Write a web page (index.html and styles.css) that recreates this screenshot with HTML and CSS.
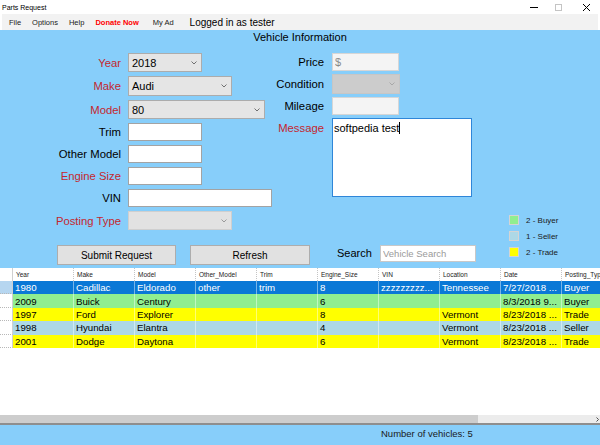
FILE: index.html
```html
<!DOCTYPE html>
<html>
<head>
<meta charset="utf-8">
<title>Parts Request</title>
<link rel="stylesheet" href="styles.css">
</head>
<body>
<div class="window">
  <div class="titlebar">
    <span class="title">Parts Request</span>
    <div class="winctl">
      <svg class="wc-min" width="8" height="8" viewBox="0 0 8 8"><path d="M0 4.5H8" stroke="#000" stroke-width="1"/></svg>
      <svg class="wc-max" width="7" height="7" viewBox="0 0 7 7"><rect x="0.5" y="0.5" width="6" height="6" fill="none" stroke="#c4c4c4" stroke-width="1"/></svg>
      <svg class="wc-close" width="7" height="7" viewBox="0 0 7 7"><path d="M0 0L7 7M7 0L0 7" stroke="#000" stroke-width="1"/></svg>
    </div>
  </div>
  <div class="menubar">
    <span>File</span>
    <span>Options</span>
    <span>Help</span>
    <span class="donate">Donate Now</span>
    <span class="myad">My Ad</span>
    <span class="logged">Logged in as tester</span>
  </div>

  <div class="main">
    <div class="heading">Vehicle Information</div>
    <div class="content">
      <div class="leftpane">
        <div class="forms">
          <div class="form-left">
            <span class="lbl req">Year</span>
            <div class="combo w74"><span>2018</span><svg width="6" height="4" viewBox="0 0 6 4"><path d="M0.5 0.5L3 3L5.5 0.5" fill="none" stroke="#707070" stroke-width="1"/></svg></div>
            <span class="lbl req">Make</span>
            <div class="combo w104 h20"><span>Audi</span><svg width="6" height="4" viewBox="0 0 6 4"><path d="M0.5 0.5L3 3L5.5 0.5" fill="none" stroke="#707070" stroke-width="1"/></svg></div>
            <span class="lbl req">Model</span>
            <div class="combo w137"><span>80</span><svg width="6" height="4" viewBox="0 0 6 4"><path d="M0.5 0.5L3 3L5.5 0.5" fill="none" stroke="#707070" stroke-width="1"/></svg></div>
            <span class="lbl">Trim</span>
            <input class="tb w74" type="text">
            <span class="lbl">Other Model</span>
            <input class="tb w74" type="text">
            <span class="lbl req">Engine Size</span>
            <input class="tb w74" type="text">
            <span class="lbl">VIN</span>
            <input class="tb w144" type="text">
            <span class="lbl req">Posting Type</span>
            <div class="combo w104 dis-light"><span></span><svg width="6" height="4" viewBox="0 0 6 4"><path d="M0.5 0.5L3 3L5.5 0.5" fill="none" stroke="#9a9a9a" stroke-width="1"/></svg></div>
          </div>
          <div class="form-right">
            <span class="lbl">Price</span>
            <input class="tb dis w67" type="text" value="$" readonly>
            <span class="lbl">Condition</span>
            <div class="combo w68 h20 dis-dark"><span></span><svg width="6" height="4" viewBox="0 0 6 4"><path d="M0.5 0.5L3 3L5.5 0.5" fill="none" stroke="#a8a8a8" stroke-width="1"/></svg></div>
            <span class="lbl">Mileage</span>
            <input class="tb dis w67" type="text" readonly>
            <span class="lbl req top">Message</span>
            <div class="memo">softpedia test<span class="caret"></span></div>
          </div>
        </div>
        <div class="actions">
          <button class="btn">Submit Request</button>
          <button class="btn refresh">Refresh</button>
          <span class="search-lbl">Search</span>
          <input class="tb search" type="text" placeholder="Vehicle Search">
        </div>
      </div>
      <div class="legend">
        <div class="li"><span class="sw buyer"></span><span>2 - Buyer</span></div>
        <div class="li"><span class="sw seller"></span><span>1 - Seller</span></div>
        <div class="li"><span class="sw trade"></span><span>2 - Trade</span></div>
      </div>
    </div>
  </div>

  <div class="grid">
    <div class="row head">
      <div class="c rh"></div>
      <div class="c">Year</div><div class="c">Make</div><div class="c">Model</div><div class="c">Other_Model</div><div class="c">Trim</div>
      <div class="c">Engine_Size</div><div class="c">VIN</div><div class="c">Location</div><div class="c">Date</div><div class="c">Posting_Type</div>
    </div>
    <div class="row sel">
      <div class="c rh"></div>
      <div class="c">1980</div><div class="c">Cadillac</div><div class="c">Eldorado</div><div class="c">other</div><div class="c">trim</div>
      <div class="c">8</div><div class="c">zzzzzzzzz...</div><div class="c">Tennessee</div><div class="c">7/27/2018 ...</div><div class="c">Buyer</div>
    </div>
    <div class="row buyer">
      <div class="c rh"></div>
      <div class="c">2009</div><div class="c">Buick</div><div class="c">Century</div><div class="c"></div><div class="c"></div>
      <div class="c">6</div><div class="c"></div><div class="c"></div><div class="c">8/3/2018 9...</div><div class="c">Buyer</div>
    </div>
    <div class="row trade">
      <div class="c rh"></div>
      <div class="c">1997</div><div class="c">Ford</div><div class="c">Explorer</div><div class="c"></div><div class="c"></div>
      <div class="c">8</div><div class="c"></div><div class="c">Vermont</div><div class="c">8/23/2018 ...</div><div class="c">Trade</div>
    </div>
    <div class="row seller">
      <div class="c rh"></div>
      <div class="c">1998</div><div class="c">Hyundai</div><div class="c">Elantra</div><div class="c"></div><div class="c"></div>
      <div class="c">4</div><div class="c"></div><div class="c">Vermont</div><div class="c">8/23/2018 ...</div><div class="c">Seller</div>
    </div>
    <div class="row trade">
      <div class="c rh"></div>
      <div class="c">2001</div><div class="c">Dodge</div><div class="c">Daytona</div><div class="c"></div><div class="c"></div>
      <div class="c">6</div><div class="c"></div><div class="c">Vermont</div><div class="c">8/23/2018 ...</div><div class="c">Trade</div>
    </div>
  </div>

  <div class="hscroll">
    <div class="thumb"></div>
    <div class="track"><svg width="3" height="5" viewBox="0 0 3 5"><path d="M0.5 0.5L2.5 2.5L0.5 4.5" fill="none" stroke="#505050" stroke-width="1"/></svg></div>
  </div>
  <div class="status">Number of vehicles: 5</div>
</div>
</body>
</html>
```

FILE: styles.css
```css
html, body {
  margin: 0;
  padding: 0;
}
body {
  width: 600px;
  height: 445px;
  overflow: hidden;
  background: #ffffff;
  font-family: "Liberation Sans", Arial, sans-serif;
  color: #000;
}
.window {
  width: 600px;
  height: 445px;
  display: flex;
  flex-direction: column;
}

/* title bar */
.titlebar {
  height: 14px;
  display: flex;
  align-items: center;
  justify-content: space-between;
  background: #fff;
}
.title {
  font-size: 7px;
  padding-left: 2px;
}
.winctl {
  display: flex;
  align-items: center;
  padding-right: 10px;
}
.wc-max { margin-left: 17px; }
.wc-close { margin-left: 21px; }

/* menu */
.menubar {
  height: 16px;
  margin: 0 2px;
  background: #f2f2f2;
  display: flex;
  align-items: center;
  padding-left: 7px;
  gap: 11px;
  font-size: 7.5px;
  color: #1a1a1a;
}
.donate {
  color: #ff0000;
  font-weight: bold;
}
.myad { margin-left: 3px; }
.logged {
  margin-left: 5px;
  font-size: 10px;
  color: #000;
}

/* main panel */
.main {
  height: 238px;
  background: #87cefa;
}
.heading {
  height: 23px;
  box-sizing: border-box;
  padding-top: 1px;
  text-align: center;
  font-size: 11px;
  line-height: 13px;
}
.content {
  display: flex;
}
.leftpane {
  width: 509px;
  display: flex;
  flex-direction: column;
}
.forms {
  display: flex;
  align-items: flex-start;
}
.form-left {
  width: 272px;
  display: grid;
  grid-template-columns: 121px auto;
  column-gap: 7px;
  row-gap: 4px;
  align-items: center;
  justify-items: start;
}
.form-right {
  display: grid;
  grid-template-columns: 52px 140px;
  column-gap: 8px;
  row-gap: 3px;
  align-items: center;
  align-content: start;
  justify-items: start;
}
.lbl {
  justify-self: end;
  font-size: 11.3px;
  white-space: nowrap;
}
.lbl.req { color: #c4262e; }
.lbl.top {
  align-self: start;
  line-height: 20px;
}

.combo {
  height: 19px;
  box-sizing: border-box;
  border: 1px solid #acacac;
  background: #e5e5e5;
  display: flex;
  align-items: center;
  justify-content: space-between;
  padding: 0 4px 0 3px;
  font-size: 11px;
}
.combo.h20 { height: 20px; }
.combo.dis-light {
  background: #e2e2e2;
  border-color: #cfcfcf;
}
.combo.dis-dark {
  background: #cccccc;
  border-color: #c6c6c6;
}
.w74 { width: 74px; }
.w104 { width: 104px; }
.w137 { width: 137px; }
.w144 { width: 144px; }
.w67 { width: 67px; }
.w68 { width: 68px; }

.tb {
  height: 18px;
  box-sizing: border-box;
  border: 1px solid #a3a3a3;
  background: #fff;
  padding: 0 2px;
  margin: 0;
  font-family: "Liberation Sans", Arial, sans-serif;
  font-size: 11px;
  color: #000;
  outline: none;
}
.tb.dis {
  background: #f4f4f4;
  border-color: #d6d6d6;
  color: #8a8a8a;
}
.memo {
  width: 140px;
  height: 79px;
  box-sizing: border-box;
  border: 1px solid #2f86d8;
  background: #fff;
  padding: 2px 1px;
  font-size: 11px;
  line-height: 14px;
}
.caret {
  display: inline-block;
  width: 1px;
  height: 12px;
  background: #000;
  vertical-align: -2px;
}

.actions {
  display: flex;
  align-items: flex-start;
  margin-top: 15px;
  padding-left: 57px;
}
.btn {
  width: 119px;
  height: 20px;
  margin: 0;
  padding: 0;
  border: 1px solid #adadad;
  background: #e1e1e1;
  font-family: "Liberation Sans", Arial, sans-serif;
  font-size: 10px;
  color: #000;
}
.btn.refresh {
  width: 120px;
  margin-left: 14px;
}
.search-lbl {
  margin-left: 27px;
  width: 35px;
  font-size: 11px;
  line-height: 17px;
}
.tb.search {
  margin-left: 8px;
  width: 96px;
  height: 17px;
  font-size: 9.5px;
  border-color: #c8c8c8;
}
.tb.search::placeholder {
  color: #9a9a9a;
}

.legend {
  margin-top: 162px;
  display: flex;
  flex-direction: column;
  gap: 6px;
}
.li {
  display: flex;
  align-items: center;
  gap: 7px;
  height: 10px;
  font-size: 8px;
  color: #1a1a1a;
}
.sw {
  width: 10px;
  height: 10px;
  box-sizing: border-box;
  border: 1px solid #d4d4d4;
}
.sw.buyer { background: #90ee90; }
.sw.seller { background: #add8e6; }
.sw.trade { background: #ffff00; }

/* grid */
.grid {
  height: 147px;
  background: #fff;
  overflow: hidden;
}
.row {
  display: grid;
  grid-template-columns: 13px repeat(10, 61px);
  height: 13.4px;
  font-size: 9.7px;
}
.row .c {
  box-sizing: border-box;
  border-right: 1px solid rgba(255, 255, 255, 0.45);
  padding-left: 2px;
  white-space: nowrap;
  overflow: hidden;
  display: flex;
  align-items: center;
}
.row .c.rh {
  background: #fff;
  border-right: 1px solid #d0d0d0;
  border-bottom: 1px dotted #b8b8b8;
}
.row.head {
  height: 13px;
  font-size: 6.5px;
  color: #222;
}
.row.head .c {
  padding-left: 3px;
  border-right: 1px dotted #c4c4c4;
}
.row.head .c.rh {
  border-bottom: none;
  border-right: 1px solid #d0d0d0;
}
.row.sel { background: #0a78d6; color: #fff; }
.row.sel .c.rh { background: #b6d6f0; }
.row.buyer { background: #90ee90; }
.row.trade { background: #ffff00; }
.row.seller { background: #add8e6; }

/* scrollbar + status */
.hscroll {
  height: 8px;
  display: flex;
}
.thumb {
  width: 478px;
  background: #cdcdcd;
}
.track {
  flex: 1;
  background: #ececec;
  display: flex;
  align-items: center;
  justify-content: flex-end;
  padding-right: 1px;
}
.status {
  height: 22px;
  box-sizing: border-box;
  border-top: 2px solid #8e8e8e;
  background: #87cefa;
  padding-left: 381px;
  font-size: 9.5px;
  line-height: 18px;
  color: #1a1a1a;
}
```
